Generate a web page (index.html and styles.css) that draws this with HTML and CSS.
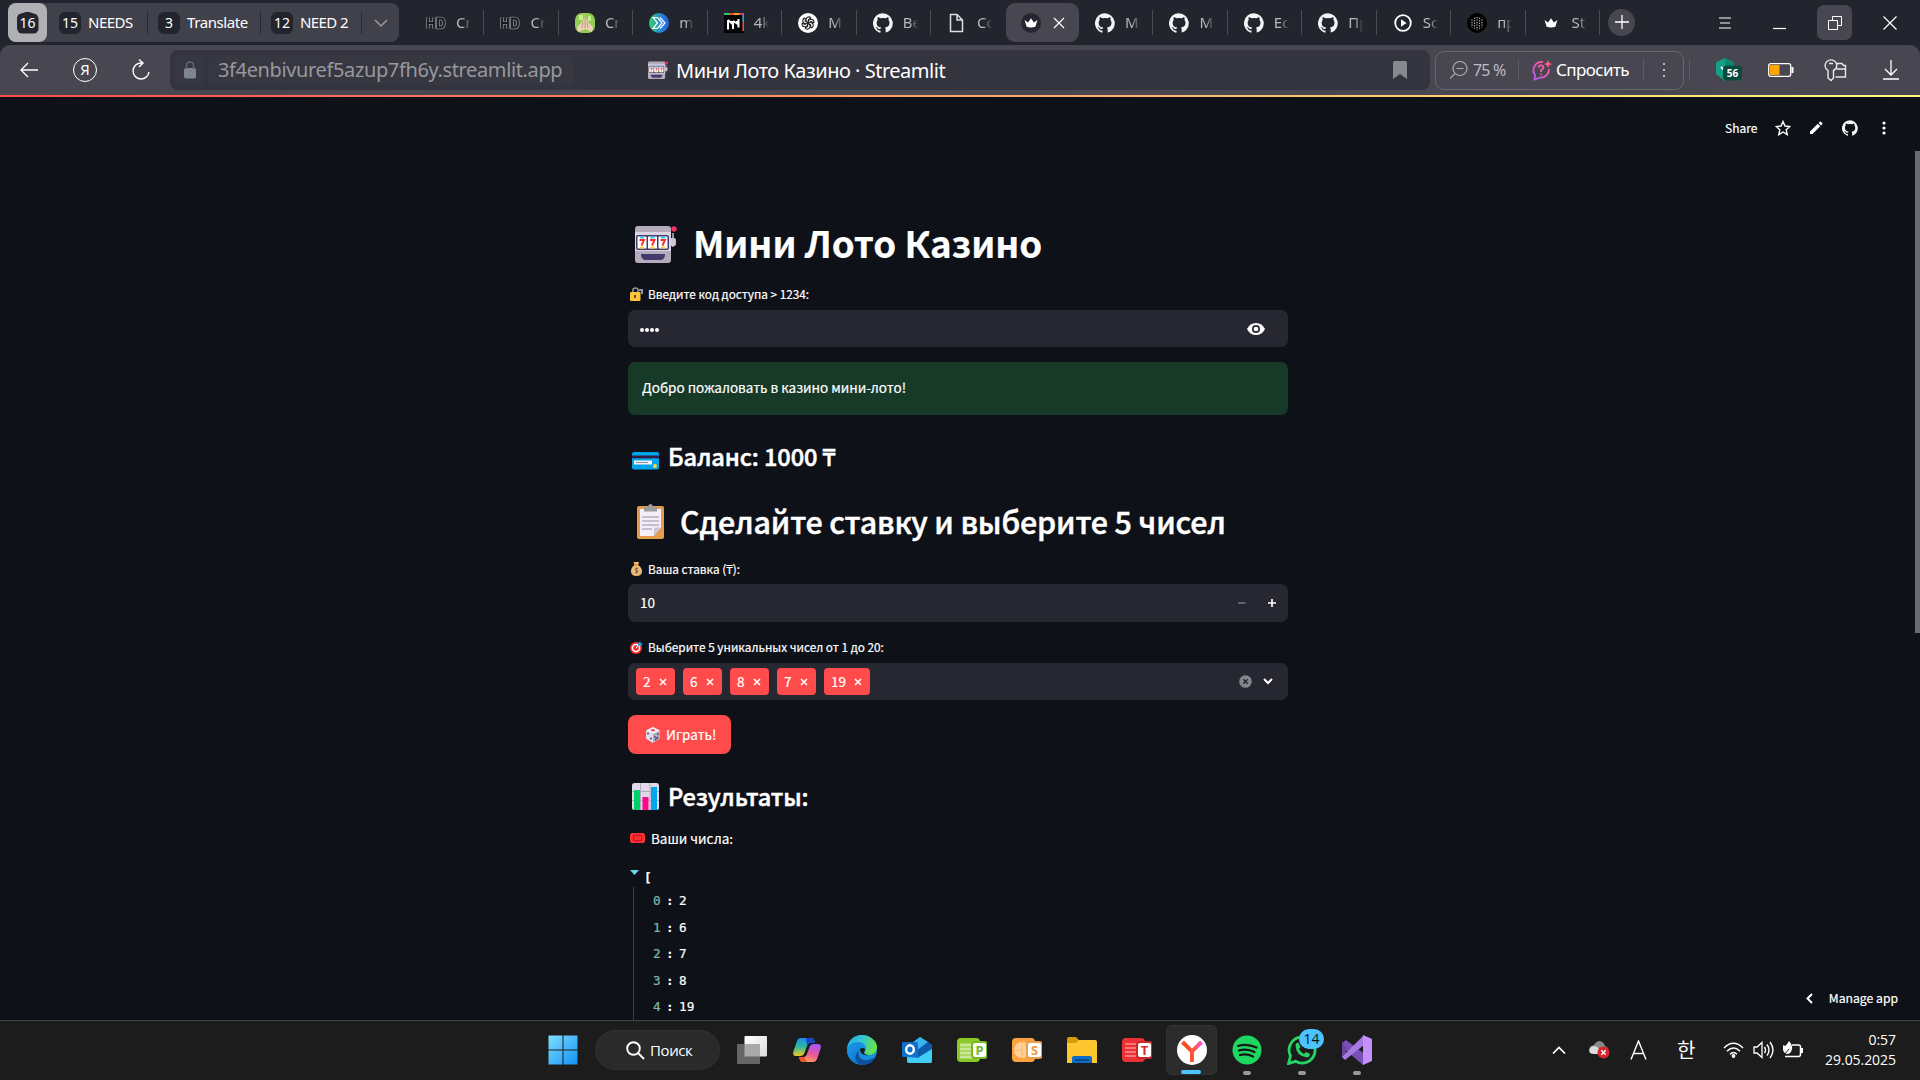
FILE: index.html
```html
<!DOCTYPE html>
<html lang="ru">
<head>
<meta charset="utf-8">
<title>Мини Лото Казино · Streamlit</title>
<link rel="stylesheet" href="styles.css">
</head>
<body>
<svg width="0" height="0" class="defs">
  <symbol id="gh" viewBox="0 0 24 24"><path d="M12 .3a12 12 0 0 0-3.8 23.4c.6.1.8-.3.8-.6v-2.2c-3.3.7-4-1.6-4-1.6-.6-1.4-1.4-1.8-1.4-1.8-1-.7.1-.7.1-.7 1.200.1 1.900 1.200 1.900 1.200 1 1.800 2.800 1.300 3.500 1 .1-.8.4-1.300.8-1.600-2.700-.3-5.500-1.300-5.500-6 0-1.200.5-2.300 1.300-3.100-.2-.4-.6-1.600 0-3.200 0 0 1-.3 3.400 1.200a11.500 11.500 0 0 1 6 0c2.300-1.500 3.300-1.200 3.300-1.200.6 1.600.2 2.800.1 3.200.8.8 1.300 1.900 1.300 3.200 0 4.600-2.800 5.600-5.500 5.900.5.4.9 1 .9 2.200v3.300c0 .3.1.7.8.6A12 12 0 0 0 12 .3"/></symbol>
  <symbol id="crown" viewBox="0 0 24 24"><path d="M1 7l6 4 5-7 5 7 6-4-3.500 11.500q-7.500 2-15 0z"/></symbol>
  <symbol id="slot" viewBox="0 0 42 38">
    <path d="M38 7v14" stroke="#998ea4" stroke-width="2"/><rect x="34" y="12" width="7" height="8" rx="2" fill="#cdc4d6"/><circle cx="39" cy="3" r="2.700" fill="#f92f60"/>
    <rect x="0" y="0" width="36" height="37" rx="3" fill="#b4acbc"/><rect x="0" y="6" width="36" height="19" fill="#dcd3e6"/>
    <rect x="1" y="9" width="33" height="15" rx="2" fill="#433b6b"/><path d="M2.500 10.500h9v12h-9zM13 10.500h9v12h-9zM23.500 10.500h9v12h-9z" fill="#fff"/>
    <path d="M5 10.500h4v2H5zM15.500 10.500h4v2h-4zM26 10.500h4v2h-4z" fill="#26c9fc"/><path d="M5 20.500h4v2H5zM15.500 20.500h4v2h-4zM26 20.500h4v2h-4z" fill="#fcd53f"/>
    <path d="M4.500 14h4.500l-2.500 5.500M15 14h4.500L17 19.500M25.500 14H30l-2.500 5.500" fill="none" stroke="#f8312f" stroke-width="1.900"/>
    <path d="M6 28h24c0 4-2 6-5 6H11c-3 0-5-2-5-6z" fill="#433b6b"/>
  </symbol>
  <symbol id="hd" viewBox="0 0 20 14"><path d="M2 1.500v11M8 1.500v11M2 7h6M12 2.500v9h2.500q3.500 0 3.500-4.500t-3.500-4.500z" fill="none" stroke="#85858a" stroke-width="3.600"/><path d="M2 1.500v11M8 1.500v11M2 7h6M12 2.500v9h2.500q3.500 0 3.500-4.500t-3.500-4.500z" fill="none" stroke="#17181d" stroke-width="1.800"/></symbol>
  <symbol id="x" viewBox="0 0 8 8"><path d="M1 1l6 6M7 1L1 7" stroke="#fff" stroke-width="1.500"/></symbol>
</svg>

<header class="tabstrip">
  <div class="groups">
    <div class="group current"><span class="badge home">16</span></div>
    <div class="group"><span class="badge">15</span><span class="gname g1">NEEDS</span></div>
    <div class="group"><span class="badge">3</span><span class="gname g2">Translate</span></div>
    <div class="group"><span class="badge">12</span><span class="gname g3">NEED 2</span></div>
    <svg class="gchev" width="14" height="8" viewBox="0 0 14 8"><path d="M1 1l6 6 6-6" fill="none" stroke="#98989e" stroke-width="1.500"/></svg>
  </div>
  <nav class="tabs">
    <div class="tab"><svg width="20" height="14"><use href="#hd"/></svg><span>Cr</span></div>
    <div class="tab"><svg width="20" height="14"><use href="#hd"/></svg><span>Cr</span></div>
    <div class="tab"><svg width="20" height="20" viewBox="0 0 20 20"><rect width="20" height="20" rx="7" fill="#93cb55"/><path d="M4 2h4v5H4zM13 3h3v5h-3z" fill="#c7ec8d"/><path d="M10 2L8 8l-6 6 1 5 7-3 7 3 1-5-6-6z" fill="#eed1b7"/><path d="M10 3v12M8 9l-1 6M12 9l1 6" stroke="#a98d74" stroke-width=".8"/></svg><span>Cr</span></div>
    <div class="tab"><svg width="20" height="20" viewBox="0 0 20 20"><defs><linearGradient id="mg"><stop stop-color="#35d06b"/><stop offset=".65" stop-color="#287fe0"/><stop offset="1" stop-color="#2463d8"/></linearGradient></defs><circle cx="10" cy="10" r="10" fill="url(#mg)"/><path d="M4 4.500h4.500l4.500 5.500-4.500 5.500H4L8.500 10zM11 4.500l5 5.500-5 5.500" fill="none" stroke="#fff" stroke-width="1.200"/></svg><span>m</span></div>
    <div class="tab"><svg width="20" height="20" viewBox="0 0 20 20"><rect width="20" height="20" fill="#050506"/><path d="M0 1h5" stroke="#31c96c" stroke-width="2"/><path d="M5 1h5" stroke="#f0443c" stroke-width="2"/><path d="M10 1h5" stroke="#f7a827" stroke-width="2"/><path d="M15 1h5" stroke="#d83b8b" stroke-width="2"/><path d="M19.200 2v7" stroke="#2fa8ea" stroke-width="1.600"/><path d="M19.200 9v9" stroke="#ee4a31" stroke-width="1.600"/><path d="M4 7v9.500M9 8v8M14.500 6v8.500M4 7l4 3.500V8M9 8l4 2.500V8" fill="none" stroke="#fff" stroke-width="2"/></svg><span>4k</span></div>
    <div class="tab"><svg width="20" height="20" viewBox="0 0 20 20"><circle cx="10" cy="10" r="10" fill="#fff"/><g fill="none" stroke="#222" stroke-width="1.100"><path id="pt" d="M8 9V6.500a2.800 2.800 0 0 1 5-1.500M13 5l-2.500 1.500v4"/><use href="#pt" transform="rotate(60 10 10)"/><use href="#pt" transform="rotate(120 10 10)"/><use href="#pt" transform="rotate(180 10 10)"/><use href="#pt" transform="rotate(240 10 10)"/><use href="#pt" transform="rotate(300 10 10)"/></g></svg><span>M</span></div>
    <div class="tab"><svg class="w" width="20" height="20"><use href="#gh"/></svg><span>Be</span></div>
    <div class="tab nosep"><svg width="20" height="20" viewBox="0 0 20 20"><path d="M3.500 1.500H10l5.500 5.500V18.500H3.500zM10 1.500v5.500h5.500" fill="none" stroke="#dedee0" stroke-width="1.500"/></svg><span>Co</span></div>
    <div class="tab active"><svg width="20" height="20" viewBox="0 0 20 20"><circle cx="10" cy="10" r="10" fill="#25262f"/><use href="#crown" x="2.500" y="3" width="15" height="14" fill="#fff"/></svg><svg width="12" height="12" viewBox="0 0 12 12"><path d="M1 1l10 10M11 1L1 11" stroke="#fff" stroke-width="1.200"/></svg></div>
    <div class="tab"><svg class="w" width="20" height="20"><use href="#gh"/></svg><span>M</span></div>
    <div class="tab"><svg class="w" width="20" height="20"><use href="#gh"/></svg><span>M</span></div>
    <div class="tab"><svg class="w" width="20" height="20"><use href="#gh"/></svg><span>Ес</span></div>
    <div class="tab"><svg class="w" width="20" height="20"><use href="#gh"/></svg><span>Пр</span></div>
    <div class="tab"><svg width="20" height="20" viewBox="0 0 20 20"><circle cx="10" cy="10" r="7.800" fill="none" stroke="#fff" stroke-width="1.800"/><path d="M8 6.300l5.500 3.700L8 13.700z" fill="#fff"/></svg><span>Sc</span></div>
    <div class="tab"><svg width="20" height="20" viewBox="0 0 20 20"><circle cx="10" cy="10" r="10" fill="#000"/><path d="M10 4v13M7.500 4.800v11M12.500 4.800v11M5 6.500v8M15 6.500v8" stroke="#bbb" stroke-width="1.200" stroke-dasharray="1.200 1.300"/></svg><span>пр</span></div>
    <div class="tab"><svg width="20" height="20" viewBox="0 0 20 20"><use href="#crown" x="1" y="3" width="16" height="14" fill="#fff"/></svg><span>St</span></div>
  </nav>
  <div class="newtab"><svg width="14" height="14" viewBox="0 0 14 14"><path d="M7 0v14M0 7h14" stroke="#fff" stroke-width="1.300"/></svg></div>
  <div class="winctl">
    <div><svg width="12" height="12" viewBox="0 0 12 12"><path d="M0 1h12M1 6h10M0 11h12" stroke="#fff" stroke-width="1.200"/></svg></div>
    <div><svg width="13" height="14" viewBox="0 0 13 14"><path d="M0 12.500h13" stroke="#fff" stroke-width="1.200"/></svg></div>
    <div class="restore"><svg width="14" height="14" viewBox="0 0 14 14"><path d="M.5 4.500h9v9h-9zM4.500 4.500v-4h9v9h-4" fill="none" stroke="#fff"/></svg></div>
    <div><svg width="14" height="14" viewBox="0 0 14 14"><path d="M.5.500l13 13M13.500.500l-13 13" stroke="#fff" stroke-width="1.200"/></svg></div>
  </div>
</header>

<div class="navbar">
  <div class="navicons">
    <svg width="18" height="16" viewBox="0 0 18 16"><path d="M8 1L1 8l7 7M1 8h17" fill="none" stroke="#fff" stroke-width="1.300"/></svg>
    <span class="ya">Я</span>
    <svg width="20" height="22" viewBox="0 0 20 22"><path d="M11 4H9.500a8 8 0 1 0 8.500 9M8 .5L12 4 8 8" fill="none" stroke="#fff" stroke-width="1.400"/></svg>
  </div>
  <div class="address">
    <div class="lock"><svg width="12" height="18" viewBox="0 0 12 18"><rect y="7" width="12" height="10.500" rx="2" fill="#7f868e"/><path d="M2.500 8V4.500a3.500 3.500 0 0 1 7 0V8" fill="none" stroke="#60676f" stroke-width="1.600"/></svg></div>
    <div class="url"><span>3f4enbivuref5azup7fh6y.streamlit.app</span></div>
    <svg class="favi" width="20" height="19"><use href="#slot"/></svg>
    <span class="ptitle">Мини Лото Казино · Streamlit</span>
    <svg class="bookmark" width="14" height="18" viewBox="0 0 14 18"><path d="M0 2q0-2 2-2h10q2 0 2 2v16l-7-5-7 5z" fill="#88888f"/></svg>
  </div>
  <div class="tools">
    <svg width="18" height="18" viewBox="0 0 18 18"><circle cx="10" cy="7.500" r="7" fill="none" stroke="#a9a9af" stroke-width="1.200"/><path d="M5 12.500L0 17.500M6.500 7.500h7" stroke="#a9a9af" stroke-width="1.200"/></svg>
    <span class="pct">75 %</span><i class="sep"></i>
    <svg class="askic" width="21" height="21" viewBox="0 0 21 21"><defs><linearGradient id="ag" x1="0" y1="1" x2="1" y2="0"><stop stop-color="#b45cf0"/><stop offset=".6" stop-color="#ff58b0"/><stop offset="1" stop-color="#ff5c78"/></linearGradient></defs><path d="M12 2A8.300 8.300 0 0 0 4 15l-.5 4.500L9 17.600A8.300 8.300 0 0 0 18 9M7.500 7.500q.5-2.300 2.700-2.200 2.300.1 2.200 2.300 0 1.400-2.300 2.500v1.800M10 13.500v1.500" fill="none" stroke="url(#ag)" stroke-width="1.800"/><path d="M17 0l1.200 2.800L21 4l-2.800 1.200L17 8l-1.200-2.800L13 4l2.800-1.200z" fill="#ff5c8c"/></svg>
    <span class="ask">Спросить</span><i class="sep"></i>
    <svg width="4" height="16" viewBox="0 0 4 16"><path d="M1 1h2v2H1zM1 7h2v2H1zM1 13h2v2H1z" fill="#b9b9be"/></svg>
  </div>
  <i class="sep"></i>
  <div class="ext">
    <svg width="26" height="24" viewBox="0 0 26 24"><path d="M9 0l9 4.500v11L9 23l-9-7V4.500z" fill="#14a085"/><path d="M9 0l9 4.500v8H9z" fill="#0c8a70"/><path d="M5 9l3 3" stroke="#fff" stroke-width="2"/><rect x="7" y="7.500" width="19" height="15" rx="4" fill="#0a4a3c"/><text x="16.500" y="18.800" text-anchor="middle" class="n56">56</text></svg>
    <svg width="26" height="14" viewBox="0 0 26 14"><rect x=".7" y=".7" width="22" height="12.600" rx="2" fill="none" stroke="#fff" stroke-width="1.300"/><rect x="2" y="2" width="9.500" height="10" fill="#ffa500"/><path d="M24.500 4v6" stroke="#fff" stroke-width="2"/></svg>
    <svg width="23" height="23" viewBox="0 0 23 23"><path d="M4 11.500A5.500 5.500 0 0 1 3 2.500Q6.500-.5 10.500 2a5.500 5.500 0 0 1-1 9.500V19l-2.500 2.500-3-2.500zM5 4.500h4M13 4.500h5l1.500 2H21.500V18H11.500M12.500 10h9" fill="none" stroke="#e8e8ea" stroke-width="1.400"/></svg>
    <svg width="16" height="20" viewBox="0 0 16 20"><path d="M8 0v15M2 9l6 6 6-6M0 19h16" fill="none" stroke="#fff" stroke-width="1.300"/></svg>
  </div>
</div>

<main class="page">
  <div class="stripe"></div>
  <div class="appbar">
    <span>Share</span>
    <svg width="16" height="16" viewBox="0 0 16 16"><path d="M8 1.500l2 4.500 4.800.5-3.600 3.200 1 4.900L8 12l-4.200 2.600 1-4.900L1.200 6.500 6 6z" fill="none" stroke="#fff" stroke-width="1.400"/></svg>
    <svg width="14" height="14" viewBox="0 0 14 14"><path d="M1 13v-2.500L8.800 2.700l2.500 2.500L3.500 13zM9.600 1.900l1.200-1.200q.6-.4 1.100 0l1.400 1.400q.4.600 0 1.100l-1.200 1.200z" fill="#fff"/></svg>
    <svg class="w" width="16" height="16"><use href="#gh"/></svg>
    <svg width="4" height="14" viewBox="0 0 4 14"><circle cx="2" cy="2" r="1.600" fill="#fff"/><circle cx="2" cy="7" r="1.600" fill="#fff"/><circle cx="2" cy="12" r="1.600" fill="#fff"/></svg>
  </div>
  <div class="content">
    <h1><svg width="42" height="38"><use href="#slot"/></svg><span>Мини Лото Казино</span></h1>

    <div class="label l1"><svg width="13" height="14" viewBox="0 0 13 14"><path d="M3 6V3q0-2 2.500-2T8 3v3" fill="none" stroke="#9b9b9b" stroke-width="1.500"/><path d="M9 3h3v4" fill="none" stroke="#998ea4" stroke-width="2"/><rect y="5" width="10.500" height="9" rx="1" fill="#fcc436"/><path d="M5 8v3" stroke="#5a3c1c" stroke-width="1.800"/></svg><span>Введите код доступа &gt; 1234:</span></div>
    <div class="field"><span class="dots"><i></i><i></i><i></i><i></i></span><svg class="eye" width="18" height="12" viewBox="0 0 18 12"><path d="M0 6q3-6 9-6t9 6q-3 6-9 6T0 6z" fill="#fff"/><circle cx="9" cy="6" r="3.200" fill="#fff" stroke="#262730" stroke-width="1.700"/></svg></div>
    <div class="success"><span>Добро пожаловать в казино мини-лото!</span></div>

    <h3 class="balance"><svg width="27" height="18" viewBox="0 0 27 18"><rect width="27" height="17.500" rx="2" fill="#00a6ed"/><path d="M0 3.500h27v2.800H0z" fill="#321b41"/><rect x="2" y="8.500" width="18" height="4" fill="#f4f4f4"/><path d="M4 10.500h12" stroke="#998ea4"/><circle cx="23" cy="14" r="2" fill="#fcd53f"/></svg><span>Баланс: 1000 ₸</span></h3>
    <h2><svg width="27" height="35" viewBox="0 0 27 35"><rect y="2" width="27" height="33" rx="2" fill="#e39d4b"/><path d="M3 5h21v18.500L16.500 32H3z" fill="#f3eef8"/><path d="M24 23.500h-6q-1 0-1 1.500v7z" fill="#cdc4d6"/><path d="M7 7.500V4q0-1 1-1h3q.5-3 2.500-3T16 3h3q1 0 1 1v3.500z" fill="#9b9b9b"/><path d="M5 13h17M5 17h17M5 21h17M5 25h10" stroke="#998ea4"/></svg><span>Сделайте ставку и выберите 5 чисел</span></h2>

    <div class="label l2"><svg width="12" height="14" viewBox="0 0 12 14"><path d="M4 3L3 0h5.500L7.500 3q4.500 3 4 7-.5 4-5.500 4T.5 10Q0 6 4 3z" fill="#e8b877"/><path d="M3.500 3h4.500" stroke="#f08a26" stroke-width="1.300"/><path d="M7.500 6.500q-3-.5-3 .8t3 1.700q.5 2-3 1.600M6 5.500v6" fill="none" stroke="#6d4534" stroke-width=".7"/></svg><span>Ваша ставка (₸):</span></div>
    <div class="field f2"><span class="val">10</span><svg class="minus" width="8" height="8" viewBox="0 0 8 8"><path d="M0 4h7.500" stroke="#6c6d78" stroke-width="1.700"/></svg><svg width="8" height="8" viewBox="0 0 8 8"><path d="M0 4h8M4 0v8" stroke="#fff" stroke-width="1.700"/></svg></div>

    <div class="label l3"><svg width="13" height="13" viewBox="0 0 13 13"><circle cx="6" cy="7" r="6" fill="#f8312f"/><circle cx="6" cy="7" r="4.300" fill="#fff"/><circle cx="6" cy="7" r="2.800" fill="#f8312f"/><path d="M6 7l4-4" stroke="#fff"/><path d="M8 5V2.500L10.500 0v2.500H13L10.500 5z" fill="#27a9e8"/></svg><span>Выберите 5 уникальных чисел от 1 до 20:</span></div>
    <div class="field select">
      <span class="tag">2<svg width="8" height="8"><use href="#x"/></svg></span><span class="tag">6<svg width="8" height="8"><use href="#x"/></svg></span><span class="tag">8<svg width="8" height="8"><use href="#x"/></svg></span><span class="tag">7<svg width="8" height="8"><use href="#x"/></svg></span><span class="tag wide">19<svg width="8" height="8"><use href="#x"/></svg></span>
      <svg class="clear" width="13" height="13" viewBox="0 0 13 13"><circle cx="6.500" cy="6.500" r="6.300" fill="#84858e"/><path d="M4.300 4.300l4.400 4.400M8.700 4.300L4.300 8.700" stroke="#262730" stroke-width="1.500"/></svg>
      <svg width="10" height="7" viewBox="0 0 10 7"><path d="M1 1l4 4 4-4" fill="none" stroke="#fff" stroke-width="2"/></svg>
    </div>
    <div class="play"><svg width="16" height="16" viewBox="0 0 16 16"><path d="M8 0l7 3.500v8L8 16l-7-4.500v-8z" fill="#b4acbc"/><path d="M1 3.500L8 0l7 3.500L8 7z" fill="#f3eef8"/><path d="M1 3.500L8 7v9l-7-4.500z" fill="#e2d9e9"/><ellipse cx="8" cy="3.300" rx="2" ry="1" fill="#f8312f"/><circle cx="3" cy="6.500" r=".9" fill="#433b6b"/><circle cx="6" cy="11.500" r=".9" fill="#433b6b"/><path d="M10 9v2M13 6v2M10 13l3-3" stroke="#433b6b" stroke-width="1.100"/></svg><span>Играть!</span></div>

    <h3 class="results"><svg width="27" height="27" viewBox="0 0 27 27"><rect width="27" height="27" rx="2.500" fill="#e1d8ec"/><path d="M8.500 0v27M18 0v27M0 8.500h27M0 17.500h27" stroke="#b4acbc"/><rect x="2" y="7" width="6" height="20" fill="#00d26a"/><rect x="10.500" y="14" width="6" height="13" fill="#f70a8d"/><rect x="19" y="4" width="6" height="23" fill="#00a6ed"/></svg><span>Результаты:</span></h3>
    <p class="nums"><svg width="15" height="10" viewBox="0 0 15 10"><path d="M1 0h13q0 1.500 1 1.500v7q-1 0-1 1.500H1Q1 8.500 0 8.500v-7Q1 1.500 1 0z" fill="#f8312f"/><rect x="3.500" y="2.500" width="8" height="5" fill="none" stroke="#ca0b4a"/></svg><span>Ваши числа:</span></p>
    <div class="json">
      <div class="open"><svg width="9" height="5" viewBox="0 0 9 5"><path d="M0 0h9L4.500 5z" fill="#66d9ef"/></svg><span>[</span></div>
      <div class="rows">
        <div><em>0</em><u>:</u><span>2</span></div>
        <div><em>1</em><u>:</u><span>6</span></div>
        <div><em>2</em><u>:</u><span>7</span></div>
        <div><em>3</em><u>:</u><span>8</span></div>
        <div><em>4</em><u>:</u><span>19</span></div>
      </div>
    </div>
  </div>
  <div class="manage"><svg width="7" height="11" viewBox="0 0 7 11"><path d="M6 1L1.500 5.500 6 10" fill="none" stroke="#fff" stroke-width="2"/></svg><span>Manage app</span></div>
  <div class="scrollbar"></div>
</main>

<footer class="taskbar">
  <div class="apps">
    <div class="app"><svg width="30" height="30" viewBox="0 0 30 30"><defs><linearGradient id="wg" x2="1" y2="1"><stop stop-color="#7fe0ff"/><stop offset="1" stop-color="#1290f5"/></linearGradient></defs><path d="M.5.500h14v14H.5zM15.500.500h14v14h-14zM.5 15.500h14v14H.5zM15.500 15.500h14v14h-14z" fill="url(#wg)"/></svg></div>
    <div class="search"><svg width="19" height="19" viewBox="0 0 19 19"><circle cx="7.500" cy="7.500" r="6.300" fill="none" stroke="#fff" stroke-width="1.900"/><path d="M12 12l6 6" stroke="#fff" stroke-width="2"/></svg><span>Поиск</span></div>
    <div class="app"><svg width="30" height="30" viewBox="0 0 30 30"><defs><linearGradient id="tv" x2="1" y2="1"><stop stop-color="#fff"/><stop offset="1" stop-color="#dcdcdc"/></linearGradient></defs><rect x="7.500" y="1" width="22.500" height="20.500" rx="1" fill="url(#tv)"/><rect y="9" width="23" height="20" rx="1" fill="#666"/><rect x="7.500" y="9" width="15.500" height="12.500" fill="#aaa"/></svg></div>
    <div class="app"><svg width="30" height="30" viewBox="0 0 30 30"><defs><linearGradient id="c1" x1="0" y1="0" x2="0" y2="1"><stop stop-color="#1b8fe8"/><stop offset=".5" stop-color="#30b8a0"/><stop offset="1" stop-color="#f5c81c"/></linearGradient><linearGradient id="c2" x1=".6" y1="0" x2="0.300" y2="1"><stop stop-color="#a855f5"/><stop offset=".55" stop-color="#ee5a94"/><stop offset="1" stop-color="#ffa45c"/></linearGradient></defs><path d="M9 3h10q3 0 4 5h-5q-2 0-3 3l-3 8q-1 2-4 2H4q-4 0-2.500-5L5 6q1-3 4-3z" fill="url(#c1)"/><path d="M14 3h5q3 0 4 5h-5q-2 0-3 3z" fill="#1846c9"/><path d="M21 27H11q-3 0-4-5h5q2 0 3-3l3-8q1-2 4-2h4q4 0 2.500 5L25 24q-1 3-4 3z" fill="url(#c2)"/><path d="M15 27h-4q-3 0-4-5h5z" fill="#f0532c"/></svg></div>
    <div class="app"><svg width="30" height="30" viewBox="0 0 30 30"><defs><linearGradient id="e1" x1="0" y1=".2" x2="1" y2=".5"><stop stop-color="#2aaee8"/><stop offset=".5" stop-color="#36c5d0"/><stop offset="1" stop-color="#69e83c"/></linearGradient><linearGradient id="e2" x2="1" y2="1"><stop stop-color="#1a9be8"/><stop offset="1" stop-color="#0a6dc8"/></linearGradient></defs><circle cx="15" cy="15" r="15" fill="#1590df"/><path d="M0 14C1 5 7 0 15 0s15 6 15 12c0 5-4 8-8 8-3 0-5-1-5-2s2-2 2-5c0-3-3-6-8-6-6 0-10 4-11 7z" fill="url(#e1)"/><path d="M0 15c1-4 5-7 9-6 3 0 5 2 4 5-3 3-3 10 5 14-9 4-18-4-18-13z" fill="url(#e2)"/><path d="M12 16c-2 6 3 10 8 9 4 0 7-3 8-2-3 5-8 7-13 7-7-1-9-11-3-14z" fill="#104f9e"/><path d="M13 14q3-2 5 0 0 2-1 3.500 1 2.500 4.500 2.500-4 1-7-1.500-2-2-1.500-4.500z" fill="#1c1c1c"/></svg></div>
    <div class="app"><svg width="30" height="30" viewBox="0 0 30 30"><path d="M5 11L18 2l12 8v16q0 2-2 2H8q-3 0-3-2z" fill="#1683d8"/><path d="M9 9l9-7 8 5-12 9z" fill="#38b5ec"/><path d="M14 16l12-9 4 3v4L16 22z" fill="#0f59ab"/><path d="M5 22l11 1 14-9v12q0 2-2 2H8q-3 0-3-2z" fill="#42cdf5"/><rect y="7" width="16" height="15" rx="1.500" fill="#116fcc"/><ellipse cx="8" cy="14.500" rx="3.800" ry="4.200" fill="none" stroke="#fff" stroke-width="2.400"/></svg></div>
    <div class="app"><svg width="30" height="30" viewBox="0 0 30 30"><rect y="3" width="23" height="24" rx="4" fill="#8bc926"/><path d="M3 10h13M3 14h13M3 18h13M3 22h13" stroke="#c9e79a" stroke-width="3"/><rect x="15" y="7" width="15" height="16" rx="3" fill="#fff" stroke="#7bb825" stroke-width="2"/><text x="22.500" y="20" text-anchor="middle" class="letter green">P</text></svg></div>
    <div class="app"><svg width="30" height="30" viewBox="0 0 30 30"><rect y="3" width="23" height="24" rx="4" fill="#fca33d"/><circle cx="10" cy="15" r="8" fill="#ffd29e"/><path d="M10 7v16M2 15h8" stroke="#fdb45c"/><rect x="15" y="7" width="15" height="16" rx="3" fill="#fff" stroke="#e8a050" stroke-width="2"/><text x="22.500" y="20" text-anchor="middle" class="letter orange">S</text></svg></div>
    <div class="app"><svg width="30" height="30" viewBox="0 0 30 30"><path d="M0 4q0-2 2-2h7l3 3h1v6H0z" fill="#d99a0b"/><path d="M0 8h9l3-3h16q2 0 2 2v21H0z" fill="#fdc82f"/><path d="M5 28v-5q0-2 2-2h16q2 0 2 2v5z" fill="#0a6cc4"/><path d="M8 25h14" stroke="#07407c" stroke-width="1.500"/></svg></div>
    <div class="app"><svg width="30" height="30" viewBox="0 0 30 30"><rect y="3" width="23" height="24" rx="4" fill="#ea3236"/><path d="M3 9h12M3 13h12M3 17h12M3 21h12" stroke="#ff8d8f" stroke-width="1.600"/><rect x="15" y="7" width="15" height="16" rx="3" fill="#fff" stroke="#c22a2e" stroke-width="2"/><text x="22.500" y="20" text-anchor="middle" class="letter red">T</text></svg></div>
    <div class="app on"><svg width="30" height="30" viewBox="0 0 30 30"><defs><linearGradient id="yg" x2="1"><stop offset=".3" stop-color="#ff4b1f"/><stop offset=".6" stop-color="#ff5a48"/><stop offset="1" stop-color="#f54fd8"/></linearGradient></defs><circle cx="15" cy="15" r="15" fill="#fff"/><path d="M5.500 7l9.500 9.500L24.500 7M15 15v12" fill="none" stroke="url(#yg)" stroke-width="4"/></svg><i class="ind blue"></i></div>
    <div class="app"><svg width="30" height="30" viewBox="0 0 30 30"><circle cx="15" cy="15" r="14.500" fill="#1ed760"/><path d="M6 11q9-3 18.500 1.500M7 15.500q8-2.500 15.500 1.500M8 20q7-1.800 13 1.500" fill="none" stroke="#161616" stroke-width="2.200" stroke-linecap="round"/></svg><i class="ind"></i></div>
    <div class="app"><svg width="30" height="30" viewBox="0 0 30 30"><path d="M1.500 28.500l2-7.500a13 13 0 1 1 5 5.300z" fill="none" stroke="#25d366" stroke-width="2.800"/><path d="M8.500 10q1-3 3-2l2 4-1.500 2q2 4 5 5l2-2 4 2q0 3-3 3.500Q9 21 8.500 10z" fill="#25d366"/></svg><b class="count">14</b><i class="ind"></i></div>
    <div class="app"><svg width="30" height="30" viewBox="0 0 30 30"><path d="M0 8l4-3 20 15v8L21 30 0 12z" fill="#7a4fb5"/><path d="M0 22V8l4 4v7l-2 4z" fill="#6b43a5"/><path d="M0 22l3 3L22 10V0L2 20z" fill="#a678e2"/><path d="M21 0l9 4v22l-9 4z" fill="#c590fa"/></svg><i class="ind"></i></div>
  </div>
  <div class="tray">
    <svg class="t1" width="14" height="8" viewBox="0 0 14 8"><path d="M1 7.500l6-6 6 6" fill="none" stroke="#fff" stroke-width="1.700"/></svg>
    <svg class="t2" width="21" height="18" viewBox="0 0 21 18"><path d="M5 13q-5 0-5-4t5-5q2-4 6-4 4 1 5 5 3 1 3 4t-3 4z" fill="#888"/><path d="M1 12q-2-6 4-7 3 0 5 3l1 5H5z" fill="#ddd"/><circle cx="14.500" cy="11.500" r="6" fill="#d6252e"/><path d="M12.300 9.300l4.400 4.400M16.700 9.300l-4.400 4.400" stroke="#fff" stroke-width="1.400"/></svg>
    <svg class="t3" width="17" height="20" viewBox="0 0 17 20"><path d="M1 19.500L8.500 1 16 19.500M3.500 13.500h10" fill="none" stroke="#fff" stroke-width="1.400"/></svg>
    <span class="ko">한</span>
    <svg class="t4" width="21" height="16" viewBox="0 0 21 16"><path d="M1 6q9.500-9.500 19 0M4 9.300q6.500-6.500 13 0M7 12.300q3.500-3.500 7 0" fill="none" stroke="#fff" stroke-width="1.500"/><circle cx="10.500" cy="14" r="1.900" fill="#fff"/></svg>
    <svg class="t5" width="21" height="18" viewBox="0 0 21 18"><path d="M1 6h3l5-4.500v15L4 12H1z" fill="none" stroke="#fff" stroke-width="1.300"/><path d="M11.500 6q2 3 0 6M14 3.500q4 5.500 0 11M17 1q6 8 0 16" fill="none" stroke="#fff" stroke-width="1.400"/></svg>
    <svg class="t6" width="21" height="17" viewBox="0 0 21 17"><path d="M9 4h6.500q2 0 2 2v7.500q0 2-2 2H2" fill="none" stroke="#fff" stroke-width="1.500"/><path d="M18 7h2v5h-2z" fill="#fff"/><path d="M6 0q4 4 3 8-1 5-5 5-5-1-4-9l2 1q2-1 4-5z" fill="#fff"/><path d="M1 14l5-6" stroke="#1c1c1c"/></svg>
    <div class="clock"><span>0:57</span><span>29.05.2025</span></div>
  </div>
</footer>
</body>
</html>
```

FILE: styles.css
```css
* { box-sizing: border-box; }
body { margin: 0; width: 1920px; height: 1080px; overflow: hidden; background: #23252e; color: #fff; font-family: "Noto Sans", "Open Sans", sans-serif; display: flex; flex-direction: column; }
svg { display: block; flex: none; }
span, p, h1, h2, h3 { white-space: nowrap; }
.defs { position: absolute; }
.w { fill: #f4f4f5; }

/* Tab strip */
.tabstrip { height: 45px; flex: none; display: flex; align-items: center; padding-left: 8px; background: #23252e; }
.groups { width: 391px; height: 39px; display: flex; align-items: center; background: #41414b; border-radius: 8px; font-size: 15px; }
.group { display: flex; align-items: center; height: 22px; padding: 0 11px 0 10px; border-right: 1px solid #292a33; gap: 7px; }
.group.current { width: 39px; height: 39px; padding: 0; justify-content: center; background: #b0b0b5; border: 0; border-radius: 8px; margin-right: 2px; }
.badge { width: 22px; height: 22px; line-height: 21px; border-radius: 6px; background: #23252e; text-align: center; font-size: 14px; }
.home { clip-path: polygon(50% 0, 92% 14%, 100% 30%, 100% 85%, 88% 100%, 12% 100%, 0 85%, 0 30%, 8% 14%); }
.gname { line-height: 22px; padding-bottom: 2px; }
.g1 { width: 48px; letter-spacing: -.5px; }
.g2 { width: 62px; letter-spacing: -.4px; }
.g3 { width: 50px; letter-spacing: -.6px; }
.gchev { margin-left: 12px; }
.tabs { display: flex; margin-left: 11px; width: 1190px; }
.tab { flex: 1; height: 39px; display: flex; align-items: center; gap: 10px; padding-left: 16px; color: #b8b8bd; font-size: 15px; background: linear-gradient(#4a4b53, #4a4b53) right center / 1px 25px no-repeat; }
.tab span { width: 15px; padding-bottom: 2px; -webkit-mask: linear-gradient(90deg, #000 45%, transparent); mask: linear-gradient(90deg, #000 45%, transparent); }
.tab.nosep { background: none; }
.tab.active { background: #484751; border-radius: 9px; gap: 12px; padding-left: 15px; }
.newtab { width: 27px; height: 27px; margin: 0 0 1px 8px; border-radius: 50%; background: #484751; display: flex; align-items: center; justify-content: center; }
.winctl { display: flex; margin-left: auto; padding-right: 3px; }
.winctl div { width: 35px; height: 35px; margin-right: 20px; display: flex; align-items: center; justify-content: center; }
.winctl div:last-child { margin-right: 10px; }
.winctl .restore { background: #484751; border-radius: 7px; }

/* Address bar */
.navbar { height: 50px; flex: none; display: flex; align-items: center; background: #484751; border-radius: 10px 10px 0 0; }
.navicons { width: 170px; display: flex; align-items: center; padding-left: 20px; }
.ya { width: 24px; height: 24px; margin: 0 34px 0 35px; border: 1.300px solid #fff; border-radius: 50%; line-height: 21px; text-align: center; font-size: 15px; }
.address { width: 1260px; height: 40px; display: flex; align-items: center; padding-left: 5px; background: #34343f; border-radius: 8px; }
.lock { width: 30px; height: 30px; display: flex; align-items: center; justify-content: center; background: #363741; border-radius: 6px; }
.url { width: 366px; height: 30px; line-height: 30px; margin-left: 3px; padding-left: 10px; background: #363741; border-radius: 6px; color: #98989e; font-size: 20px; letter-spacing: -.37px; }
.favi { margin-left: 74px; }
.ptitle { margin-left: 8px; font-size: 20px; letter-spacing: -.48px; }
.bookmark { margin: 0 23px 0 auto; }
.sep { width: 1px; height: 22px; background: #5b5b64; }
.tools { width: 249px; height: 39px; margin-left: 5px; display: flex; align-items: center; border: 1px solid #686870; border-radius: 9px; padding-left: 14px; }
.tools + .sep { margin-left: 5px; }
.pct { width: 33px; margin: 0 12px 0 5px; padding-bottom: 1px; color: #bcbcc1; font-size: 16px; letter-spacing: -.8px; }
.askic { margin: 0 4px 0 12px; }
.ask { width: 72px; margin-right: 15px; padding-bottom: 2px; font-size: 17px; letter-spacing: -.6px; }
.tools svg:last-child { margin-left: 18px; }
.ext { display: flex; align-items: center; }
.ext svg { margin-left: 26px; }
.ext svg + svg { margin-left: 26px; }
.ext svg:nth-child(3) { margin-left: 30px; }
.ext svg:last-child { margin-left: 36px; }
.n56 { fill: #fff; font: bold 10px "Noto Sans", sans-serif; }

/* Page */
.page { position: relative; height: 925px; flex: none; overflow: hidden; background: #0e1117; font-family: "Noto Sans CJK SC", "Noto Sans", sans-serif; font-weight: 400; }
.content span, .appbar span, .manage span { -webkit-text-stroke: .2px currentColor; }
.stripe { height: 2px; background: linear-gradient(90deg, #ff4b4b, #fffd80); }
.appbar { height: 32px; margin-top: 15px; display: flex; align-items: center; padding-left: 1725px; font-size: 12px; }
.appbar span { width: 32px; margin-right: 18px; padding-bottom: 1px; }
.appbar svg:nth-of-type(2) { margin: 0 19px 0 18px; }
.appbar svg:nth-of-type(3) { margin-right: 24px; }
.content { width: 660px; margin: 68px 0 0 628px; }
h1, h2, h3, p { margin: 0; display: flex; align-items: center; }
h1 { height: 60px; padding-left: 7px; gap: 16px; font-size: 36.700px; line-height: 60px; font-weight: 700; }
h1 svg { margin-top: 6px; }
h2 { height: 46px; margin-top: 22px; padding-left: 9px; gap: 16px; font-size: 30.400px; line-height: 46px; font-weight: 500; letter-spacing: -.16px; }
h3 { height: 40px; padding-left: 4px; gap: 9px; font-size: 23.600px; line-height: 40px; font-weight: 500; letter-spacing: -.1px; }
.content h2 span, .content h3 span { -webkit-text-stroke: .5px currentColor; }
.balance { margin-top: 21px; }
.balance svg { margin-top: 9px; }
.results { margin-top: 22px; }
.label { height: 20px; line-height: 20px; padding-left: 2px; display: flex; align-items: center; font-size: 11.800px; }
.label svg { width: 13px; margin-right: 5px; }
.l1 { margin-top: 12px; }
.l2 { margin-top: 15px; }
.l3 { margin-top: 15px; }
.field { height: 37px; margin-top: 6px; padding: 0 12px; display: flex; align-items: center; background: #262730; border-radius: 7px; font-size: 13.500px; }
.dots { display: flex; gap: 1px; padding-top: 2px; }
.dots i { width: 4px; height: 4px; border-radius: 50%; background: #fff; }
.eye { margin: 0 11px 0 auto; }
.success { height: 53px; margin-top: 15px; padding-left: 14px; background: #173928; border-radius: 7px; font-size: 13.500px; line-height: 51px; }
.f2 { height: 38px; margin-top: 5px; }
.val { padding-bottom: 2px; }
.minus { margin: 0 22px 0 auto; }
.select { margin-top: 6px; padding-left: 8px; gap: 8px; }
.tag { width: 39px; height: 27px; line-height: 25px; padding-left: 7px; background: #ff4b4b; border-radius: 4px; display: flex; align-items: center; gap: 8px; }
.tag.wide { width: 46px; }
.clear { margin-left: auto; }
.clear + svg { margin: 0 3px 0 3px; }
.play { width: 103px; height: 39px; margin-top: 15px; padding-left: 17px; display: flex; align-items: center; gap: 5px; background: #ff4b4b; border-radius: 8px; font-size: 13.500px; }
.play span { line-height: 36px; padding-bottom: 1px; }
.nums { height: 20px; margin-top: 12px; padding-left: 2px; gap: 6px; font-size: 13.500px; line-height: 20px; }
.json { margin-top: 21px; font-family: "DejaVu Sans Mono", monospace; font-size: 12.700px; font-weight: 400; }
.open { height: 18px; display: flex; padding-left: 2px; gap: 5px; font-weight: 700; }
.open svg { margin-top: 1px; }
.rows { margin-left: 5px; height: 140px; border-left: 1px solid #3b3d42; }
.rows div { height: 26.500px; line-height: 27px; display: flex; padding-left: 19px; }
.rows em { width: 13px; font-style: normal; color: #7fb8ae; -webkit-text-stroke: .2px currentColor; }
.rows u { width: 13px; text-decoration: none; font-weight: 700; }
.manage { position: absolute; right: 22px; bottom: 10px; height: 24px; display: flex; align-items: center; gap: 16px; font-size: 12.200px; }
.manage span { line-height: 22px; padding-bottom: 1px; }
.scrollbar { position: absolute; right: 0; top: 56px; width: 5px; height: 482px; background: #6b6b6d; }

/* Taskbar */
.taskbar { height: 60px; flex: none; display: flex; background: #1c1c1c; border-top: 1px solid #454545; font-family: "Open Sans", "Noto Sans", sans-serif; }
.apps { display: flex; align-items: center; padding-left: 537px; width: 1537px; padding-bottom: 1px; }
.app { position: relative; width: 51px; height: 50px; margin-right: 4px; display: flex; align-items: center; justify-content: center; border-radius: 6px; }
.app.on { background: #2b2b2b; border: 1px solid #343434; }
.app + .search { margin: 0 6px 0 3px; }
.search { width: 125px; height: 40px; border-radius: 20px; background: #2a2a2a; border: 1px solid #313131; display: flex; align-items: center; padding-left: 30px; gap: 5px; font-size: 15px; letter-spacing: -.4px; }
.ind { position: absolute; bottom: 0; left: 22px; width: 8px; height: 4px; border-radius: 2px; background: #999; }
.ind.blue { left: 14px; width: 20px; background: #4cc2ff; }
.count { position: absolute; left: 23px; top: 4px; width: 25px; height: 20px; line-height: 20px; border-radius: 10px; background: #4cc2ff; color: #111; font-size: 14px; font-weight: 400; text-align: center; }
.letter { font: bold 13px "Noto Sans", sans-serif; }
.green { fill: #76b52a; }
.orange { fill: #eb9a3a; }
.red { fill: #d62c30; }
.tray { display: flex; align-items: center; padding-left: 15px; width: 383px; padding-bottom: 2px; }
.t2 { margin-left: 23px; }
.t3 { margin-left: 20px; }
.ko { width: 20px; margin-left: 30px; font: 20px/24px "Noto Sans CJK KR", sans-serif; }
.t4 { margin-left: 26px; }
.t5 { margin-left: 9px; }
.t6 { margin-left: 9px; }
.clock { width: 90px; margin-left: auto; margin-right: 24px; display: flex; flex-direction: column; align-items: flex-end; font-size: 14px; line-height: 20px; letter-spacing: -.05px; }
```
